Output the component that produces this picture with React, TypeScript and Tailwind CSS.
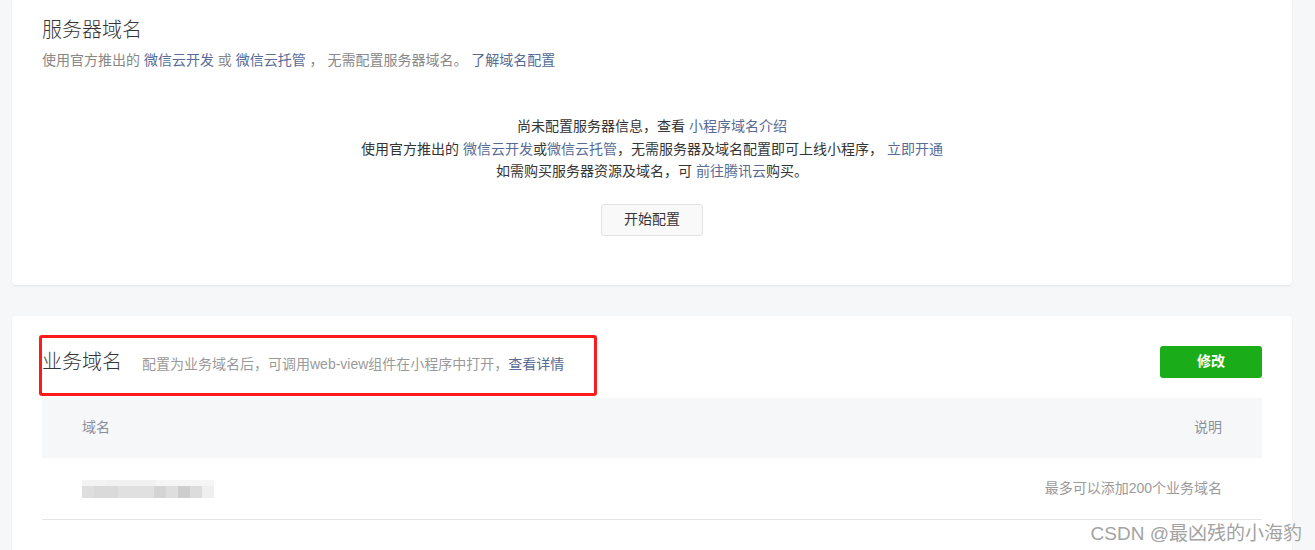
import React from "react";

const font = { fontFamily: '"Liberation Sans", "Noto Sans CJK SC", sans-serif' };

export default function App() {
  return (
    <div
      className="relative w-[1315px] h-[550px] overflow-hidden bg-[#f6f7f9] pl-[12px] pr-[23px]"
      style={font}
    >
      {/* Card 1 */}
      <div className="bg-white rounded-b-[4px] shadow-[0_1px_2px_rgba(0,0,0,0.08)] px-[30px] pt-[16px] pb-[49px]">
        <h2 className="text-[20px] leading-[28px] text-[#353535] font-light">服务器域名</h2>
        <p className="mt-[6px] text-[14px] leading-[20px] text-[#888]">
          使用官方推出的 <span className="text-[#576b95]">微信云开发</span> 或{" "}
          <span className="text-[#576b95]">微信云托管</span> ， 无需配置服务器域名。{" "}
          <span className="text-[#576b95]">了解域名配置</span>
        </p>
        <div className="mt-[45px] flex flex-col items-center text-[14px] leading-[22.5px] text-[#353535]">
          <p>
            尚未配置服务器信息，查看 <span className="text-[#576b95]">小程序域名介绍</span>
          </p>
          <p>
            使用官方推出的 <span className="text-[#576b95]">微信云开发</span>或
            <span className="text-[#576b95]">微信云托管</span>，无需服务器及域名配置即可上线小程序，{" "}
            <span className="text-[#576b95]">立即开通</span>
          </p>
          <p>
            如需购买服务器资源及域名，可 <span className="text-[#576b95]">前往腾讯云</span>购买。
          </p>
          <button className="mt-[21px] w-[102px] h-[32px] rounded-[3px] border border-[#e4e4e4] bg-[#f9f9f9] text-[14px] text-[#353535]">
            开始配置
          </button>
        </div>
      </div>

      {/* Card 2 */}
      <div className="relative mt-[31px] bg-white rounded-t-[4px] shadow-[0_1px_2px_rgba(0,0,0,0.08)] px-[30px] pt-[30px] h-[260px]">
        <div className="flex items-center justify-between h-[32px]">
          <div className="flex items-baseline">
            <h2 className="text-[20px] leading-[28px] text-[#353535] font-light">业务域名</h2>
            <span className="ml-[20px] text-[14px] text-[#9a9a9a]">
              配置为业务域名后，可调用web-view组件在小程序中打开，
              <span className="text-[#576b95]">查看详情</span>
            </span>
          </div>
          <button className="w-[102px] h-[32px] rounded-[3px] bg-[#1aad19] text-white text-[14px] font-bold">
            修改
          </button>
        </div>
        <div className="mt-[20px]">
          <div className="h-[60px] bg-[#f6f7f9] flex items-center justify-between px-[40px] text-[14px] text-[#8a8f9a]">
            <span>域名</span>
            <span>说明</span>
          </div>
          <div className="h-[62px] border-b border-[#e5e5e5] flex items-center justify-between px-[40px] text-[14px] text-[#9a9a9a]">
            <div className="flex flex-col w-[132px] h-[18px] mt-[2px]">
              <div className="flex h-[6px]">
                <div className="w-[25px] bg-[#f3f3f3]" />
                <div className="w-[48px] bg-[#f1f1f1]" />
                <div className="w-[59px] bg-[#f5f5f5]" />
              </div>
              <div className="flex h-[12px]">
                <div className="w-[12px] bg-[#dedede]" />
                <div className="w-[24px] bg-[#dadada]" />
                <div className="w-[36px] bg-[#e0e0e0]" />
                <div className="w-[12px] bg-[#d4d4d4]" />
                <div className="w-[12px] bg-[#dedede]" />
                <div className="w-[12px] bg-[#cdcdcd]" />
                <div className="w-[12px] bg-[#dcdcdc]" />
                <div className="w-[12px] bg-[#efefef]" />
              </div>
            </div>
            <span>最多可以添加200个业务域名</span>
          </div>
        </div>

        {/* red annotation box */}
        <div className="absolute left-[27px] top-[19px] w-[558px] h-[61px] border-[3px] border-[#fb1b1b] rounded-[3px] pointer-events-none" />
      </div>

      {/* watermark */}
      <div
        className="absolute right-[13px] bottom-[4px] text-[19px] leading-[24px] text-[#a3a3a3]"
        style={{ textShadow: "0 0 2px #fff, 0 0 2px #fff" }}
      >
        CSDN @最凶残的小海豹
      </div>
    </div>
  );
}
